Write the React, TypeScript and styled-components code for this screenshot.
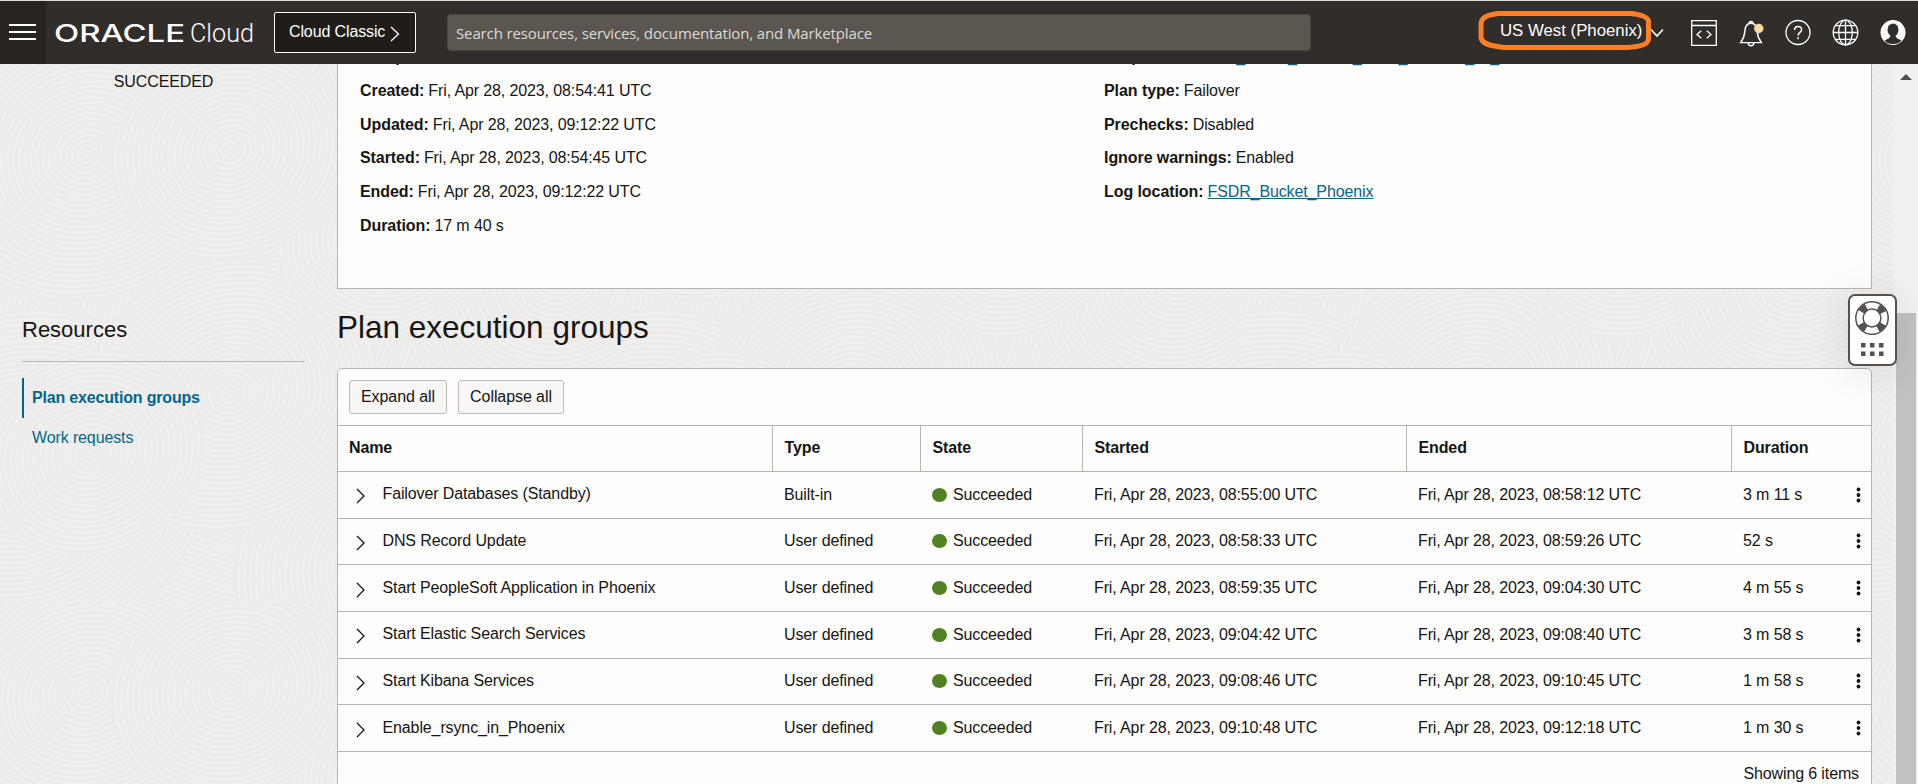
import React from "react";
import styled, { createGlobalStyle } from "styled-components";

const Global = createGlobalStyle`
  * { box-sizing: border-box; }
  body {
    margin: 0;
    overflow: hidden;
    background: #f0efed;
    color: #161513;
    font: 16px/20px "Liberation Sans", Arial, sans-serif;
    letter-spacing: -0.12px;
  }
`;

const Page = styled.div`
  position: relative;
  height: 784px;
  overflow: hidden;
  display: flex;
  flex-direction: column;
`;

const Texture = styled.svg`
  position: absolute;
  left: 0;
  top: 64px;
  width: 1894px;
  height: 720px;
`;

/* ---------- Top bar ---------- */

const TopBar = styled.header`
  position: relative;
  z-index: 2;
  flex: none;
  height: 64px;
  display: flex;
  align-items: stretch;
  background: #312d2a;
  border-top: 1px solid #d9dedd;
  color: #fff;
`;

const MenuButton = styled.div`
  width: 46px;
  padding: 23px 10px 0 9px;
  display: flex;
  flex-direction: column;
  gap: 5px;
  background: #272320;
`;

const MenuLine = styled.div`
  height: 2px;
  background: #fff;
`;

const Logo = styled.svg`
  margin-left: 6px;
  width: 206px;
  height: 63px;
  letter-spacing: 0;
`;

const ClassicButton = styled.div`
  margin: 11px 0 0 16px;
  width: 142px;
  height: 41px;
  padding: 9px 0 0 14px;
  display: flex;
  gap: 5px;
  background: #201c18;
  border: 1px solid #fcfbfa;
  border-radius: 2px;
  white-space: nowrap;
  svg { margin-top: 4px; }
`;

const SearchBox = styled.div`
  margin: 13px 0 0 31px;
  width: 864px;
  height: 37px;
  padding: 8px 0 0 8px;
  background: #5b564f;
  border: 1px solid #4a453f;
  border-radius: 4px;
  color: #dedbd8;
  font: 15px/20px "Open Sans", "Noto Sans", sans-serif;
  letter-spacing: -0.13px;
  white-space: nowrap;
`;

const Region = styled.div`
  position: relative;
  margin-left: 167px;
  width: 187px;
  padding: 20px 0 0 22px;
  display: flex;
  font-size: 16.8px;
  letter-spacing: 0;
  white-space: nowrap;
`;

const RegionMark = styled.svg`
  position: absolute;
  left: 0;
  top: 9px;
`;

const RegionCaret = styled.svg`
  position: absolute;
  left: 172px;
  top: 27px;
`;

const HeaderIcons = styled.div`
  margin-left: 25px;
  display: flex;
  align-items: flex-start;
  gap: 20.7px;
  padding-top: 18px;
  svg { display: block; }
`;

/* ---------- Body ---------- */

const Body = styled.div`
  position: relative;
  flex: 1;
  min-height: 0;
  display: flex;
`;

const Sidebar = styled.aside`
  flex: none;
  width: 337px;
  padding: 8px 32px 0 22px;
`;

const Status = styled.div`
  text-align: center;
`;

const SideTitle = styled.h2`
  margin: 223px 0 0;
  height: 47px;
  font-size: 22px;
  line-height: 30px;
  letter-spacing: 0;
  font-weight: 400;
  border-bottom: 1px solid #b9b4ae;
`;

const SideNav = styled.nav`
  margin-top: 16px;
`;

const SideLink = styled.a<{ $active?: boolean }>`
  display: flex;
  align-items: center;
  height: 40px;
  padding-left: 8px;
  border-left: 2px solid ${(p) => (p.$active ? "#00688c" : "transparent")};
  color: #00688c;
  font-weight: ${(p) => (p.$active ? 700 : 400)};
  letter-spacing: ${(p) => (p.$active ? -0.18 : -0.12)}px;
`;

const Main = styled.main`
  flex: none;
  width: 1535px;
  display: flex;
  flex-direction: column;
`;

const Details = styled.section`
  flex: none;
  height: 225px;
  padding: 0 22px;
  display: grid;
  grid-template-columns: 744px 1fr;
  background: #fdfdfb;
  border: 1px solid #b9b4ae;
  border-top: 0;
`;

const DetailColumn = styled.div`
  margin-top: -23.5px;
`;

const DetailLine = styled.div`
  height: 33.67px;
  line-height: 33.67px;
  white-space: nowrap;
  &:first-child { line-height: 31.2px; }
  b {
    margin-right: 4px;
    letter-spacing: -0.07px;
  }
`;

const DetailLink = styled.a`
  color: #00688c;
  text-decoration: underline;
`;

const PlanLink = styled.span`
  display: inline-flex;
  color: #00688c;
`;

const PlanMark = styled.span<{ $gap: number }>`
  margin-left: ${(p) => p.$gap}px;
`;

const GroupTitle = styled.h1`
  flex: none;
  margin: 0;
  height: 79px;
  padding-top: 18px;
  font-size: 31.5px;
  line-height: 40px;
  letter-spacing: 0;
  font-weight: 400;
  white-space: nowrap;
`;

const TableCard = styled.section`
  flex: none;
  height: 440px;
  background: #fdfdfb;
  border: 1px solid #b9b4ae;
  border-radius: 5px 5px 0 0;
`;

const Toolbar = styled.div`
  height: 57px;
  padding: 11px;
  display: flex;
  gap: 11px;
  border-bottom: 1px solid #b9b4ae;
`;

const ToolButton = styled.div<{ $width: number }>`
  width: ${(p) => p.$width}px;
  height: 34px;
  line-height: 32px;
  text-align: center;
  letter-spacing: -0.08px;
  background: #f8f6f5;
  border: 1px solid #bdb8b3;
  border-radius: 3px;
`;

const columns = "435px 148px 162px 324px 325px 1fr";

const HeadRow = styled.div`
  display: grid;
  grid-template-columns: ${columns};
  height: 46px;
  font-weight: 700;
  border-bottom: 1px solid #b9b4ae;
`;

const HeadCell = styled.div`
  padding-left: 11.5px;
  line-height: 44px;
  border-right: 1px solid #b9b4ae;
  &:first-child { padding-left: 11px; }
  &:last-child { border-right: 0; }
`;

const Row = styled.div<{ $tall: boolean }>`
  display: grid;
  grid-template-columns: ${columns};
  height: ${(p) => (p.$tall ? 47 : 46)}px;
  border-bottom: 1px solid #b9b4ae;
`;

const Cell = styled.div<{ $lift?: number }>`
  display: flex;
  align-items: center;
  padding: 0 10px 0 11px;
  padding-bottom: ${(p) => p.$lift ?? 0}px;
  white-space: nowrap;
`;

const NameText = styled.span`
  margin-left: 17px;
`;

const ExpandIcon = styled.svg`
  margin: 3px 0 0 6.5px;
`;

const Dot = styled.span`
  width: 15px;
  height: 14px;
  margin-right: 6px;
  border-radius: 50%;
  background: #508223;
`;

const Kebab = styled.svg`
  margin-left: auto;
`;

const Footer = styled.div`
  padding: 12px 12px 0 0;
  text-align: right;
`;

const Scrollbar = styled.div`
  margin-left: auto;
  width: 24px;
  padding: 10px 2px 0;
  display: flex;
  flex-direction: column;
  align-items: center;
  background: #f1f1f1;
`;

const Thumb = styled.div`
  margin-top: 233px;
  width: 20px;
  flex: 1;
  background: #c1c1c1;
`;

const HelpWidget = styled.div`
  position: absolute;
  left: 1848px;
  top: 294px;
  z-index: 3;
  width: 49px;
  height: 72px;
  display: flex;
  justify-content: center;
  background: #fff;
  border: 2px solid #57514d;
  border-radius: 7px;
  box-shadow: 0 4px 40px rgba(0, 0, 0, 0.1);
`;

const details = [
  ["Created:", "Fri, Apr 28, 2023, 08:54:41 UTC"],
  ["Updated:", "Fri, Apr 28, 2023, 09:12:22 UTC"],
  ["Started:", "Fri, Apr 28, 2023, 08:54:45 UTC"],
  ["Ended:", "Fri, Apr 28, 2023, 09:12:22 UTC"],
  ["Duration:", "17 m 40 s"],
];

const settings = [
  ["Plan type:", "Failover"],
  ["Prechecks:", "Disabled"],
  ["Ignore warnings:", "Enabled"],
];

const groups = [
  ["Failover Databases (Standby)", "Built-in", "08:55:00", "08:58:12", "3 m 11 s"],
  ["DNS Record Update", "User defined", "08:58:33", "08:59:26", "52 s"],
  ["Start PeopleSoft Application in Phoenix", "User defined", "08:59:35", "09:04:30", "4 m 55 s"],
  ["Start Elastic Search Services", "User defined", "09:04:42", "09:08:40", "3 m 58 s"],
  ["Start Kibana Services", "User defined", "09:08:46", "09:10:45", "1 m 58 s"],
  ["Enable_rsync_in_Phoenix", "User defined", "09:10:48", "09:12:18", "1 m 30 s"],
];

function Rings({ x, y, count }: { x: number; y: number; count: number }) {
  const radii = Array.from({ length: count }, (_, i) => (count - i) * 6);
  return (
    <g transform={`translate(${x} ${y}) rotate(-25) scale(1 0.88)`}>
      {radii.map((r, i) => (
        <circle key={r} r={r} fill={i === 0 ? "#f0efed" : "none"} stroke="#ecebe9" strokeWidth="2.4" />
      ))}
    </g>
  );
}

function BackgroundTexture() {
  return (
    <Texture>
      <defs>
        <pattern id="ripples" width="620" height="540" patternUnits="userSpaceOnUse">
          <rect width="620" height="540" fill="#f0efed" />
          <Rings x={310} y={270} count={80} />
          <Rings x={20} y={420} count={32} />
          <Rings x={610} y={430} count={32} />
          <Rings x={400} y={500} count={28} />
          <Rings x={400} y={-20} count={28} />
          <Rings x={560} y={210} count={26} />
          <Rings x={230} y={330} count={25} />
          <Rings x={87} y={90} count={27} />
          <Rings x={390} y={170} count={19} />
          <Rings x={230} y={86} count={20} />
          <Rings x={90} y={390} count={19} />
        </pattern>
      </defs>
      <rect width="100%" height="100%" fill="url(#ripples)" />
    </Texture>
  );
}

function CodeIcon() {
  return (
    <svg width="28" height="28" viewBox="0 0 28 28" fill="none" stroke="#fff" strokeWidth="1.3">
      <path d="M1.7 1.7h24.6v24.6H1.7zM1.7 6.500h24.6" />
      <path d="M11.300 11.700 7 15.500l4.300 3.800M16.700 11.700l4.300 3.800-4.300 3.800" />
    </svg>
  );
}

function BellIcon() {
  return (
    <svg width="26" height="28" viewBox="0 0 26 28" fill="none" stroke="#fff" strokeWidth="1.4">
      <path d="M1.600 23.600c3.400-4.600 3.900-6.800 4.200-11 .3-5.200 2.500-8.300 6.200-8.300s5.900 3.100 6.200 8.300c.3 4.200.8 6.400 4.200 11zM9.200 24a2.800 2.800 0 0 0 5.600 0M10 4.500a2 2 0 1 1 4 0" />
      <circle cx="19.800" cy="9.500" r="4.700" fill="#f9dd9f" stroke="none" />
    </svg>
  );
}

function HelpIcon() {
  return (
    <svg width="26" height="27" viewBox="0 0 26 27" fill="none" stroke="#fff" strokeWidth="1.3">
      <circle cx="13" cy="13.500" r="12" />
      <path d="M9.600 11c0-2.300 1.400-3.600 3.500-3.600s3.500 1.300 3.500 3.200c0 1.600-1 2.400-1.900 3.100-1.100.8-1.600 1.500-1.600 3M13.100 18.300v1.900" strokeWidth="1.500" />
    </svg>
  );
}

function GlobeIcon() {
  return (
    <svg width="27" height="27" viewBox="0 0 27 27" fill="none" stroke="#fff" strokeWidth="1.300">
      <circle cx="13.500" cy="13.500" r="12.300" />
      <ellipse cx="13.500" cy="13.500" rx="6.800" ry="12.300" />
      <path d="M13.500 1.200v24.600M1.200 13.500h24.600M3.500 6.700h20M3.500 20.300h20" />
    </svg>
  );
}

function UserIcon() {
  return (
    <svg width="26" height="27" viewBox="0 0 26 27">
      <circle cx="13" cy="13.500" r="12.500" fill="#fff" />
      <ellipse cx="13" cy="10.900" rx="5.500" ry="6.500" fill="#312d2a" />
      <path d="M4.600 21.800c.5-.8 1.300-1.200 2.400-1.600 2.300-.9 3.300-1.700 3.400-3.700h5.200c.1 2 1.100 2.800 3.400 3.700 1.100.4 1.900.8 2.400 1.600A11.300 11.300 0 0 1 13 25a11.300 11.300 0 0 1-8.400-3.200z" fill="#312d2a" />
    </svg>
  );
}

function LifebuoyIcon() {
  return (
    <svg width="45" height="68" viewBox="0 0 45 68">
      <g transform="translate(22 22)" fill="none" stroke="#57514d">
        <circle r="12.400" strokeWidth="7" strokeDasharray="7 12.478" strokeDashoffset="-6.240" />
        <circle r="16.200" strokeWidth="1.500" />
        <circle r="8.900" strokeWidth="1.500" />
      </g>
      <g fill="#57514d">
        {[11, 20, 29].map((x) => (
          <React.Fragment key={x}>
            <rect x={x} y="47" width="4.500" height="4.500" />
            <rect x={x} y="55.500" width="4.500" height="4.500" />
          </React.Fragment>
        ))}
      </g>
    </svg>
  );
}

export default function App() {
  return (
    <Page>
      <Global />
      <BackgroundTexture />
      <TopBar>
        <MenuButton>
          <MenuLine />
          <MenuLine />
          <MenuLine />
        </MenuButton>
        <Logo fill="#fff">
          <text x="2" y="41" fontFamily="Inter, sans-serif" fontSize="24.500" fontWeight="500" textLength="131" lengthAdjust="spacingAndGlyphs">ORACLE</text>
          <text x="138" y="41" fontFamily="Roboto, sans-serif" fontSize="26" fontWeight="300" textLength="64" lengthAdjust="spacingAndGlyphs">Cloud</text>
        </Logo>
        <ClassicButton>
          Cloud Classic
          <svg width="10" height="16" viewBox="0 0 10 16" fill="none" stroke="#fff" strokeWidth="1.300">
            <path d="M1 1l7.500 7L1 15" />
          </svg>
        </ClassicButton>
        <SearchBox>Search resources, services, documentation, and Marketplace</SearchBox>
        <Region>
          <RegionMark width="174" height="42" fill="none" stroke="#ff7f27" strokeWidth="5">
            <path d="M20 3.500H152C162 4 170.500 7 170.500 12V29C170.500 35 160 37 148 37.500H26C13 36 3 34 3 27V14C3 7 10 5 20 3.500Z" />
          </RegionMark>
          US West (Phoenix)
          <RegionCaret width="14" height="10" fill="none" stroke="#fff" strokeWidth="1.600">
            <path d="M1 1.500l6 6.500 6-6.500" />
          </RegionCaret>
        </Region>
        <HeaderIcons>
          <CodeIcon />
          <BellIcon />
          <HelpIcon />
          <GlobeIcon />
          <UserIcon />
        </HeaderIcons>
      </TopBar>
      <Body>
        <Sidebar>
          <Status>SUCCEEDED</Status>
          <SideTitle>Resources</SideTitle>
          <SideNav>
            <SideLink $active>Plan execution groups</SideLink>
            <SideLink>Work requests</SideLink>
          </SideNav>
        </Sidebar>
        <Main>
          <Details>
            <DetailColumn>
              <DetailLine><b>Compartment:</b></DetailLine>
              {details.map(([label, value]) => (
                <DetailLine key={label}><b>{label}</b>{value}</DetailLine>
              ))}
            </DetailColumn>
            <DetailColumn>
              <DetailLine>
                <b>DR plan:</b>
                <PlanLink>
                  {[63, 43, 56, 37, 58, 16].map((gap) => (
                    <PlanMark key={gap} $gap={gap}>_</PlanMark>
                  ))}
                </PlanLink>
              </DetailLine>
              {settings.map(([label, value]) => (
                <DetailLine key={label}><b>{label}</b>{value}</DetailLine>
              ))}
              <DetailLine><b>Log location:</b><DetailLink>FSDR_Bucket_Phoenix</DetailLink></DetailLine>
            </DetailColumn>
          </Details>
          <GroupTitle>Plan execution groups</GroupTitle>
          <TableCard>
            <Toolbar>
              <ToolButton $width={98}>Expand all</ToolButton>
              <ToolButton $width={106}>Collapse all</ToolButton>
            </Toolbar>
            <HeadRow>
              {["Name", "Type", "State", "Started", "Ended", "Duration"].map((name) => (
                <HeadCell key={name}>{name}</HeadCell>
              ))}
            </HeadRow>
            {groups.map(([name, type, started, ended, duration], i) => {
              const tall = i !== 1 && i !== 4;
              const lift = tall ? 0 : 1;
              return (
                <Row key={name} $tall={tall}>
                  <Cell $lift={i === 0 || i === 3 ? 2 : lift}>
                    <ExpandIcon width="10" height="16" fill="none" stroke="#161513" strokeWidth="1.300">
                      <path d="M1 1l7 7-7 7" />
                    </ExpandIcon>
                    <NameText>{name}</NameText>
                  </Cell>
                  <Cell $lift={lift}>{type}</Cell>
                  <Cell $lift={lift}><Dot />Succeeded</Cell>
                  <Cell $lift={lift}>Fri, Apr 28, 2023, {started} UTC</Cell>
                  <Cell $lift={lift}>Fri, Apr 28, 2023, {ended} UTC</Cell>
                  <Cell $lift={lift}>
                    {duration}
                    <Kebab width="5" height="16" fill="#161513">
                      <circle cx="2.500" cy="2.500" r="1.900" />
                      <circle cx="2.500" cy="8" r="1.900" />
                      <circle cx="2.500" cy="13.500" r="1.900" />
                    </Kebab>
                  </Cell>
                </Row>
              );
            })}
            <Footer>Showing 6 items</Footer>
          </TableCard>
        </Main>
        <Scrollbar>
          <svg width="12" height="6"><path d="M0 6l6-6 6 6z" fill="#505050" /></svg>
          <Thumb />
        </Scrollbar>
      </Body>
      <HelpWidget><LifebuoyIcon /></HelpWidget>
    </Page>
  );
}
